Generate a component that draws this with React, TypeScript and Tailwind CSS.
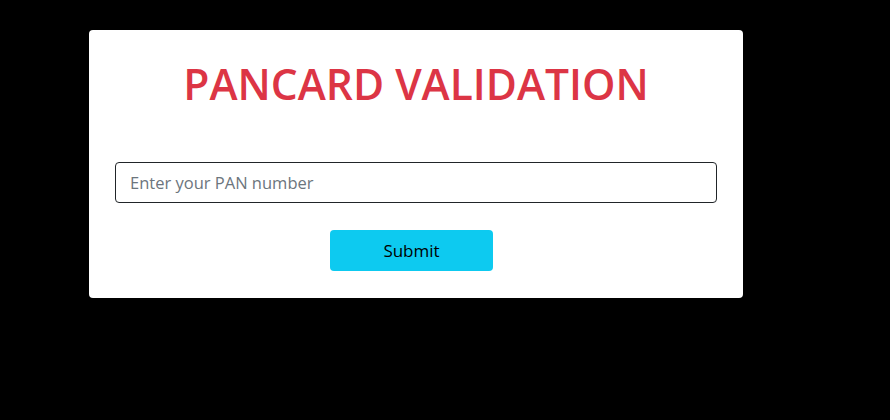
export default function App() {
  return (
    <div className="min-h-[420px] w-full bg-black font-['Open_Sans',sans-serif]">
      <div className="pl-[89px] pt-[30px]">
        <div className="w-[654px] rounded-[4px] bg-white px-[26px] pt-[21px] pb-[27px]">
          <h1 className="text-center text-[42.5px] font-semibold leading-[66px] text-[#dc3545]">PANCARD VALIDATION</h1>
          <input
            type="text"
            placeholder="Enter your PAN number"
            className="mt-[45px] block h-[41px] w-full rounded-[4px] border border-[#212529] px-[14px] text-[16.5px] text-[#212529] placeholder:text-[#6c757d] focus:outline-none"
          />
          <div className="mt-[27px] flex justify-center">
            <button className="mr-[9px] h-[41px] w-[163px] rounded-[4px] bg-[#0dcaf0] text-[17px] text-black">Submit</button>
          </div>
        </div>
      </div>
    </div>
  )
}
